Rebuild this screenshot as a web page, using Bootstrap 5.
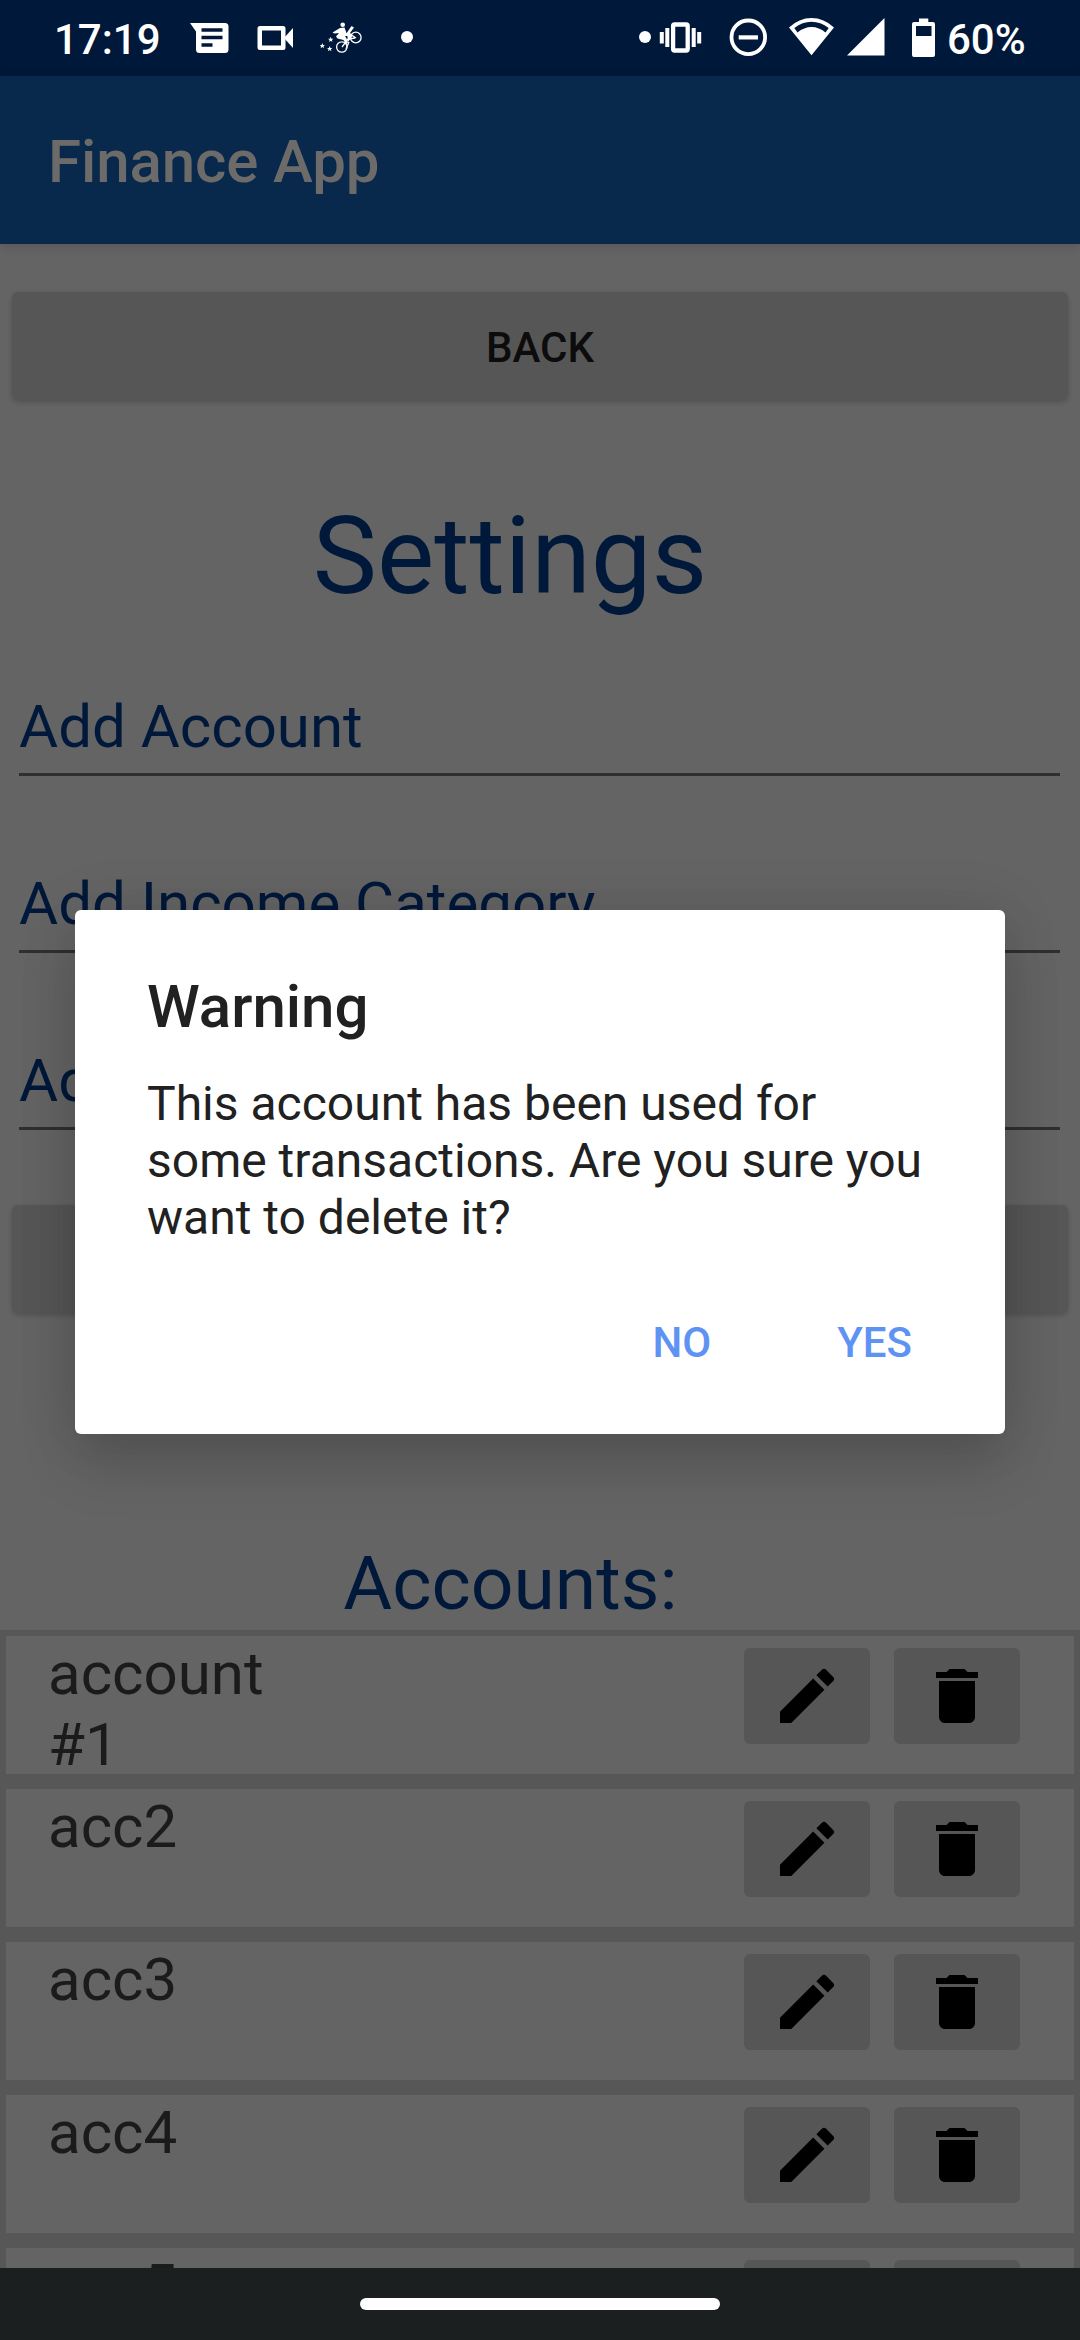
<!DOCTYPE html>
<html lang="en">
<head>
<meta charset="utf-8">
<meta name="viewport" content="width=device-width, initial-scale=1">
<title>Finance App</title>
<link href="https://cdn.jsdelivr.net/npm/bootstrap@5.3.0/dist/css/bootstrap.min.css" rel="stylesheet">
<style>
body{font-family:Roboto,sans-serif;background:#646464;color:#1a1a1a;height:2340px;overflow:hidden}
.screen{width:1080px;height:2340px}
.statusbar{height:76px;background:#001839;color:#fff;padding:0 53px 0 54px;font-size:42px;font-weight:500;line-height:76px}
.statusbar span{padding-top:2px}
.clock{width:116px}
.battery{width:80px;white-space:nowrap}
.appbar{height:168px;background:#08284c;padding:4px 48px 0;box-shadow:0 3px 10px rgba(0,0,0,.12);z-index:1}
.appbar .navbar-brand{font-size:60px;font-weight:500;color:#6c6b69;line-height:70px;letter-spacing:-.1px}
.content{min-height:0}
.wide-btn{height:108px;margin:0 12px;padding:3px 0 0;border:0;border-radius:6px;background:#565656;color:#0c0c0c;font-size:42px;font-weight:500;line-height:105px;box-shadow:0 2px 5px rgba(0,0,0,.2)}
.page-title{font-size:108px;line-height:126px;color:#001839;font-weight:400;margin:93px 60px 0 0}
.fields{margin:55px 20px 0 19px}
.field-line{height:102px;border-bottom:3px solid #2f2f2f;color:#001839;font-size:60px;line-height:105px;margin-bottom:75px}
.sub-title{font-size:75px;line-height:88px;color:#001839;font-weight:400;margin:226px 59px 3px 0}
.accounts{background:#575757;padding:6px 6px 0;gap:15px}
.account{height:138px;background:#646464;padding:2px 54px 0 42px;gap:24px}
.account-name{width:230px;font-size:60px;line-height:71px;color:#1b1b1b}
.tool{width:126px;height:96px;margin-top:10px;border:0;border-radius:6px;background:#565656;padding:0}
.tool svg{width:72px;height:72px}
.navstrip{height:72px;background:#1c1f20;z-index:2}
.pill{width:360px;height:12px;background:#fff}
.alertbox{top:910px;left:75px;width:930px;height:524px;background:#fff;border-radius:6px;padding:62px 72px 0;color:#212121;box-shadow:0 32px 56px rgba(0,0,0,.15),0 0 60px rgba(0,0,0,.1);z-index:3}
.alertbox h2{font-size:60px;line-height:70px;font-weight:500;margin:0 0 33px}
.alertbox p{font-size:48px;line-height:57px;margin:0 0 72px}
.alert-actions{gap:126px;padding-right:21px}
.alertbox .btn{font-size:42px;font-weight:500;line-height:50px;color:#5e92f3;padding:0;border:0}
</style>
</head>
<body>
<svg class="d-none">
  <symbol id="edit" viewBox="0 0 24 24"><path d="M3 17.25V21h3.75L17.81 9.94l-3.75-3.75L3 17.25zM20.71 7.04a1 1 0 0 0 0-1.41l-2.34-2.34a1 1 0 0 0-1.41 0l-1.83 1.83 3.75 3.75 1.83-1.83z"/></symbol>
  <symbol id="trash" viewBox="0 0 24 24"><path d="M6 19c0 1.1.9 2 2 2h8c1.1 0 2-.9 2-2V7H6v12zM19 4h-3.500l-1-1h-5l-1 1H5v2h14V4z"/></symbol>
  <symbol id="star" viewBox="-3 -3 6 6"><path d="M0-3 .8-.9 3-.8 1.300.6 1.900 2.800 0 1.500-1.900 2.800-1.300.6-3-.8-.8-.9z"/></symbol>
</svg>
<div class="screen d-flex flex-column overflow-hidden position-relative">
  <div class="statusbar d-flex flex-shrink-0">
    <span class="clock">17:19</span>
    <svg width="250" height="76" viewBox="170 0 250 76" fill="#fff">
      <path fill-rule="evenodd" d="M190 23h35q3.500 0 3.500 3.500v23q0 3.500-3.500 3.500h-25.500q-3.500 0-3.500-3.500V31.500zM201.500 28.300v3.400h21v-3.400zM201.500 35.800v3.400h21v-3.400zM201.500 43.300v3.400h11v-3.400z"/>
      <path fill-rule="evenodd" d="M260 26h23q2.500 0 2.500 2.500v19q0 2.500-2.500 2.500h-23q-2.500 0-2.500-2.500v-19q0-2.500 2.500-2.500zM262 30.500v15h19v-15z"/>
      <path d="M284 38 293 28v20z"/>
      <g fill="none" stroke="#fff" stroke-width="1.300"><circle cx="355.800" cy="37.500" r="5.300"/><circle cx="341.800" cy="47" r="5.200"/><path d="M342 47l6-8 7-1M349 42l-3 7M350 34l6 4"/></g>
      <circle cx="342.700" cy="24.800" r="2.300"/>
      <path d="M332.500 32.500 340 28l4.500-.5 2 5.500 3 1-1 2h-3.500l1.500 2.500 1.500 4-2 2-2.500-4.500-6-1.500-1.500-2 3-3.500-4.500.5z"/>
      <path d="M347 32.500 351.500 26l2.500 1.500-4 5.500 2.500 3-4.500 6z"/>
      <use href="#star" x="328" y="36.800" width="5.400" height="5.400"/><use href="#star" x="319.600" y="43" width="5.400" height="5.400"/><use href="#star" x="327" y="46" width="5.400" height="5.400"/>
      <circle cx="407" cy="37" r="6"/>
    </svg>
    <svg class="ms-auto" width="317" height="76" viewBox="630 0 317 76" fill="#fff">
      <circle cx="645" cy="37" r="6"/>
      <rect x="673.100" y="24.500" width="14.600" height="26" rx="1.500" fill="none" stroke="#fff" stroke-width="4.300"/>
      <path d="M659.800 32h4v11.500h-4zM665.300 28h4v19h-4zM691.700 28h4v19h-4zM697.200 32h4v11.500h-4z"/>
      <circle cx="748.300" cy="37.300" r="16.800" fill="none" stroke="#fff" stroke-width="3.800"/><path d="M738.700 35.300h19.300v4.200h-19.300z"/>
      <path fill-rule="evenodd" d="M789 27.500Q799 18 811.500 18T834 27.500L811.500 55.300zM794.300 28 797.500 32.500Q804 27 811.500 27T825.500 32.500L828.700 28Q820.500 21.800 811.500 21.800T794.300 28z"/>
      <path d="M847 55.500 884.500 18v37.500z"/>
      <path fill-rule="evenodd" d="M919 18.500h9.300V22h4.700q2 0 2 2v31q0 2-2 2h-19q-2 0-2-2V24q0-2 2-2h5zM916 26v10h15.500V26z"/>
    </svg>
    <span class="battery">60%</span>
  </div>
  <nav class="navbar appbar flex-shrink-0"><span class="navbar-brand m-0 p-0">Finance App</span></nav>
  <main class="content d-flex flex-column flex-grow-1 overflow-hidden">
    <button class="btn wide-btn mt-5 flex-shrink-0">BACK</button>
    <h1 class="page-title text-center">Settings</h1>
    <div class="fields">
      <div class="field-line">Add Account</div>
      <div class="field-line">Add Income Category</div>
      <div class="field-line">Ad</div>
    </div>
    <button class="btn wide-btn flex-shrink-0" aria-label="Save"></button>
    <h2 class="sub-title text-center">Accounts:</h2>
    <div class="accounts d-flex flex-column flex-shrink-0">
      <div class="account d-flex align-items-start"><div class="account-name me-auto">account #1</div><button class="btn tool"><svg><use href="#edit"/></svg></button><button class="btn tool"><svg><use href="#trash"/></svg></button></div>
      <div class="account d-flex align-items-start"><div class="account-name me-auto">acc2</div><button class="btn tool"><svg><use href="#edit"/></svg></button><button class="btn tool"><svg><use href="#trash"/></svg></button></div>
      <div class="account d-flex align-items-start"><div class="account-name me-auto">acc3</div><button class="btn tool"><svg><use href="#edit"/></svg></button><button class="btn tool"><svg><use href="#trash"/></svg></button></div>
      <div class="account d-flex align-items-start"><div class="account-name me-auto">acc4</div><button class="btn tool"><svg><use href="#edit"/></svg></button><button class="btn tool"><svg><use href="#trash"/></svg></button></div>
      <div class="account d-flex align-items-start"><div class="account-name me-auto">acc5</div><button class="btn tool"><svg><use href="#edit"/></svg></button><button class="btn tool"><svg><use href="#trash"/></svg></button></div>
    </div>
  </main>
  <div class="navstrip d-flex justify-content-center align-items-center flex-shrink-0"><div class="pill rounded-pill"></div></div>
  <div class="alertbox position-absolute" role="dialog">
    <h2>Warning</h2>
    <p>This account has been used for some transactions. Are you sure you want to delete it?</p>
    <div class="alert-actions d-flex justify-content-end"><button class="btn">NO</button><button class="btn">YES</button></div>
  </div>
</div>
<script src="https://cdn.jsdelivr.net/npm/bootstrap@5.3.0/dist/js/bootstrap.bundle.min.js"></script>
</body>
</html>
